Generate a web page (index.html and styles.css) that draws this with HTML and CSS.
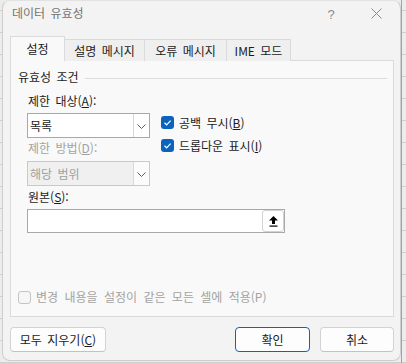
FILE: index.html
```html
<!DOCTYPE html>
<html lang="ko">
<head>
<meta charset="utf-8">
<link rel="stylesheet" href="styles.css">
</head>
<body>
<div class="dialog">
  <div class="titlebar">
    <span class="title">데이터 유효성</span>
    <span class="help">?</span>
    <span class="close"><svg width="11" height="11" viewBox="0 0 11 11"><path d="M0.5 0.5 L10.5 10.5 M10.5 0.5 L0.5 10.5" stroke="#8a8a8a" stroke-width="1" fill="none"/></svg></span>
  </div>
  <div class="tabs">
    <div class="tab active">설정</div>
    <div class="tab t2">설명 메시지</div>
    <div class="tab t3">오류 메시지</div>
    <div class="tab t4">IME 모드</div>
  </div>
  <div class="panel">
    <div class="group-title"><span>유효성 조건</span><span class="rule"></span></div>
    <div class="criteria">
      <div class="col">
        <div class="label first">제한 대상(<u>A</u>):</div>
        <div class="combo">
          <span class="val">목록</span>
          <span class="drop"><svg width="9" height="5" viewBox="0 0 9 5"><polyline points="0.5,0.5 4.5,4.5 8.5,0.5" fill="none" stroke="#5a5a5a" stroke-width="1"/></svg></span>
        </div>
        <div class="label second disabled">제한 방법(<u>D</u>):</div>
        <div class="combo off">
          <span class="val">해당 범위</span>
          <span class="drop"><svg width="9" height="5" viewBox="0 0 9 5"><polyline points="0.5,0.5 4.5,4.5 8.5,0.5" fill="none" stroke="#5a5a5a" stroke-width="1"/></svg></span>
        </div>
      </div>
      <div class="checks">
        <div class="check"><span class="box on"><svg width="13" height="13" viewBox="0 0 13 13"><polyline points="3.5,6.8 5.6,8.8 9.6,4.6" fill="none" stroke="#ffffff" stroke-width="1.2"/></svg></span>공백 무시(<u>B</u>)</div>
        <div class="check"><span class="box on"><svg width="13" height="13" viewBox="0 0 13 13"><polyline points="3.5,6.8 5.6,8.8 9.6,4.6" fill="none" stroke="#ffffff" stroke-width="1.2"/></svg></span>드롭다운 표시(<u>I</u>)</div>
      </div>
    </div>
    <div class="label source-label">원본(<u>S</u>):</div>
    <div class="source">
      <span class="pick"><svg width="9" height="11" viewBox="0 0 9 11"><path d="M4.5 0 L9 4.5 H6 V8 H3 V4.5 H0 Z" fill="#000"/><rect x="0.5" y="9.5" width="8" height="1.2" fill="#000"/></svg></span>
    </div>
    <div class="apply"><span class="box"></span>변경 내용을 설정이 같은 모든 셀에 적용(P)</div>
  </div>
  <div class="buttons">
    <button class="btn clear">모두 지우기(<u>C</u>)</button>
    <span class="spacer"></span>
    <button class="btn ok">확인</button>
    <button class="btn cancel">취소</button>
  </div>
</div>
</body>
</html>
```
FILE: styles.css
```css
html, body {
  margin: 0;
  padding: 0;
}
body {
  width: 406px;
  height: 363px;
  overflow: hidden;
  background-color: #ececec;
  background-image:
    linear-gradient(to right, transparent 401px, #a3a3a3 401px, #a3a3a3 402px, transparent 402px),
    repeating-linear-gradient(to bottom, transparent 0, transparent 10px, #cfcfcf 10px, #cfcfcf 11px, transparent 11px, transparent 22px);
  font-family: "Noto Sans CJK KR", "Noto Sans", sans-serif;
  font-size: 12px;
  word-spacing: 2px;
  color: #1b1b1b;
}
u {
  text-decoration: underline;
  text-underline-offset: 1px;
}
.dialog {
  box-sizing: border-box;
  margin-left: 2px;
  width: 399px;
  height: 361px;
  background: #f3f3f3;
  border: 1px solid #cdcdcd;
  border-top-color: #e2e2e2;
  border-radius: 8px;
  display: flex;
  flex-direction: column;
  padding: 0 6px 7px 7px;
}
.titlebar {
  height: 36px;
  display: flex;
  align-items: flex-start;
  padding-top: 4px;
  box-sizing: border-box;
  line-height: 16px;
}
.title {
  margin-left: 2px;
  color: #737373;
  font-size: 12px;
}
.help {
  margin-left: auto;
  color: #8a8a8a;
  font-family: "Liberation Sans", sans-serif;
  font-size: 13px;
  margin-top: 2px;
  width: 10px;
  text-align: center;
}
.close {
  margin-left: 35px;
  margin-right: 12px;
  margin-top: 3px;
  display: flex;
}
.tabs {
  display: flex;
  align-items: flex-end;
  height: 24px;
  margin-bottom: -1px;
  position: relative;
  z-index: 1;
}
.tab {
  box-sizing: border-box;
  height: 22px;
  border: 1px solid #dadada;
  border-bottom: none;
  background: #efefef;
  display: flex;
  align-items: center;
  justify-content: center;
  padding-top: 1px;
  margin-left: -1px;
  line-height: 16px;
}
.tab.active {
  height: 25px;
  width: 55px;
  margin-left: 0;
  background: #f9f9f9;
  padding-top: 0;
  z-index: 2;
}
.t2 { width: 81px; }
.t3 { width: 83px; }
.t4 { width: 65px; }
.panel {
  box-sizing: border-box;
  height: 257px;
  background: #f9f9f9;
  border: 1px solid #dadada;
  display: flex;
  flex-direction: column;
  padding: 8px 6px 0 7px;
}
.group-title {
  display: flex;
  align-items: center;
  line-height: 16px;
  height: 16px;
}
.rule {
  flex: 1;
  height: 1px;
  background: #dcdcdc;
  margin-left: 6px;
  margin-top: 2px;
}
.criteria {
  display: flex;
  margin-left: 9px;
}
.col {
  display: flex;
  flex-direction: column;
  width: 123px;
}
.label {
  line-height: 16px;
  height: 16px;
  padding-left: 1px;
}
.label.first { margin-top: 8px; margin-bottom: 4px; }
.label.second { margin-top: 2px; margin-bottom: 5px; }
.disabled { color: #a3a3a3; }
.combo {
  box-sizing: border-box;
  height: 25px;
  border: 1px solid #a8a8a8;
  background: #ffffff;
  display: flex;
  align-items: center;
}
.combo .val {
  flex: 1;
  padding-left: 2px;
  line-height: 16px;
  padding-top: 1px;
}
.combo .drop {
  box-sizing: border-box;
  width: 16px;
  height: 100%;
  border-left: 1px solid #d6d6d6;
  display: flex;
  align-items: center;
  justify-content: center;
  padding-top: 1px;
}
.combo.off {
  background: #f0f0f0;
  border-color: #c9c9c9;
}
.combo.off .val { color: #a0a0a0; }
.combo.off .drop {
  background: #fbfbfb;
  border-left-color: #d9d9d9;
}
.checks {
  display: flex;
  flex-direction: column;
  margin-left: 11px;
  padding-top: 26px;
}
.check {
  display: flex;
  align-items: center;
  height: 23px;
  line-height: 16px;
}
.check .box {
  margin-right: 5px;
}
.box {
  box-sizing: border-box;
  width: 13px;
  height: 13px;
  border-radius: 3px;
  display: inline-flex;
}
.box.on {
  background: #0a64bd;
}
.label.source-label {
  margin-left: 9px;
  margin-top: 3px;
  margin-bottom: 4px;
}
.source {
  box-sizing: border-box;
  margin-left: 9px;
  width: 258px;
  height: 24px;
  background: #ffffff;
  border: 1px solid #a8a8a8;
  display: flex;
  justify-content: flex-end;
  align-items: center;
  padding-right: 0;
}
.pick {
  box-sizing: border-box;
  width: 22px;
  height: 22px;
  border: 1px solid #d2d2d2;
  border-radius: 3px;
  background: #ffffff;
  display: flex;
  align-items: center;
  justify-content: center;
  padding-top: 1px;
}
.apply {
  margin-top: auto;
  margin-bottom: 11px;
  display: flex;
  align-items: center;
  height: 16px;
  line-height: 16px;
  color: #a3a3a3;
  word-spacing: 3px;
}
.apply .box {
  border: 1px solid #c4c4c4;
  background: #f6f6f6;
  margin-right: 5px;
}
.buttons {
  display: flex;
  margin-top: 10px;
  height: 25px;
}
.spacer { flex: 1; }
.btn {
  box-sizing: border-box;
  height: 25px;
  font-family: "Noto Sans CJK KR", "Noto Sans", sans-serif;
  font-size: 12px;
  word-spacing: 2px;
  line-height: 16px;
  color: #1b1b1b;
  background: #fdfdfd;
  border: 1px solid #d3d3d3;
  border-bottom-color: #c2c2c2;
  border-radius: 4px;
  padding: 1px 0 0 0;
  margin: 0;
}
.btn.clear { width: 96px; }
.btn.ok {
  width: 75px;
  border: 1px solid #1062b8;
  margin-right: 10px;
}
.btn.cancel { width: 74px; }
```
